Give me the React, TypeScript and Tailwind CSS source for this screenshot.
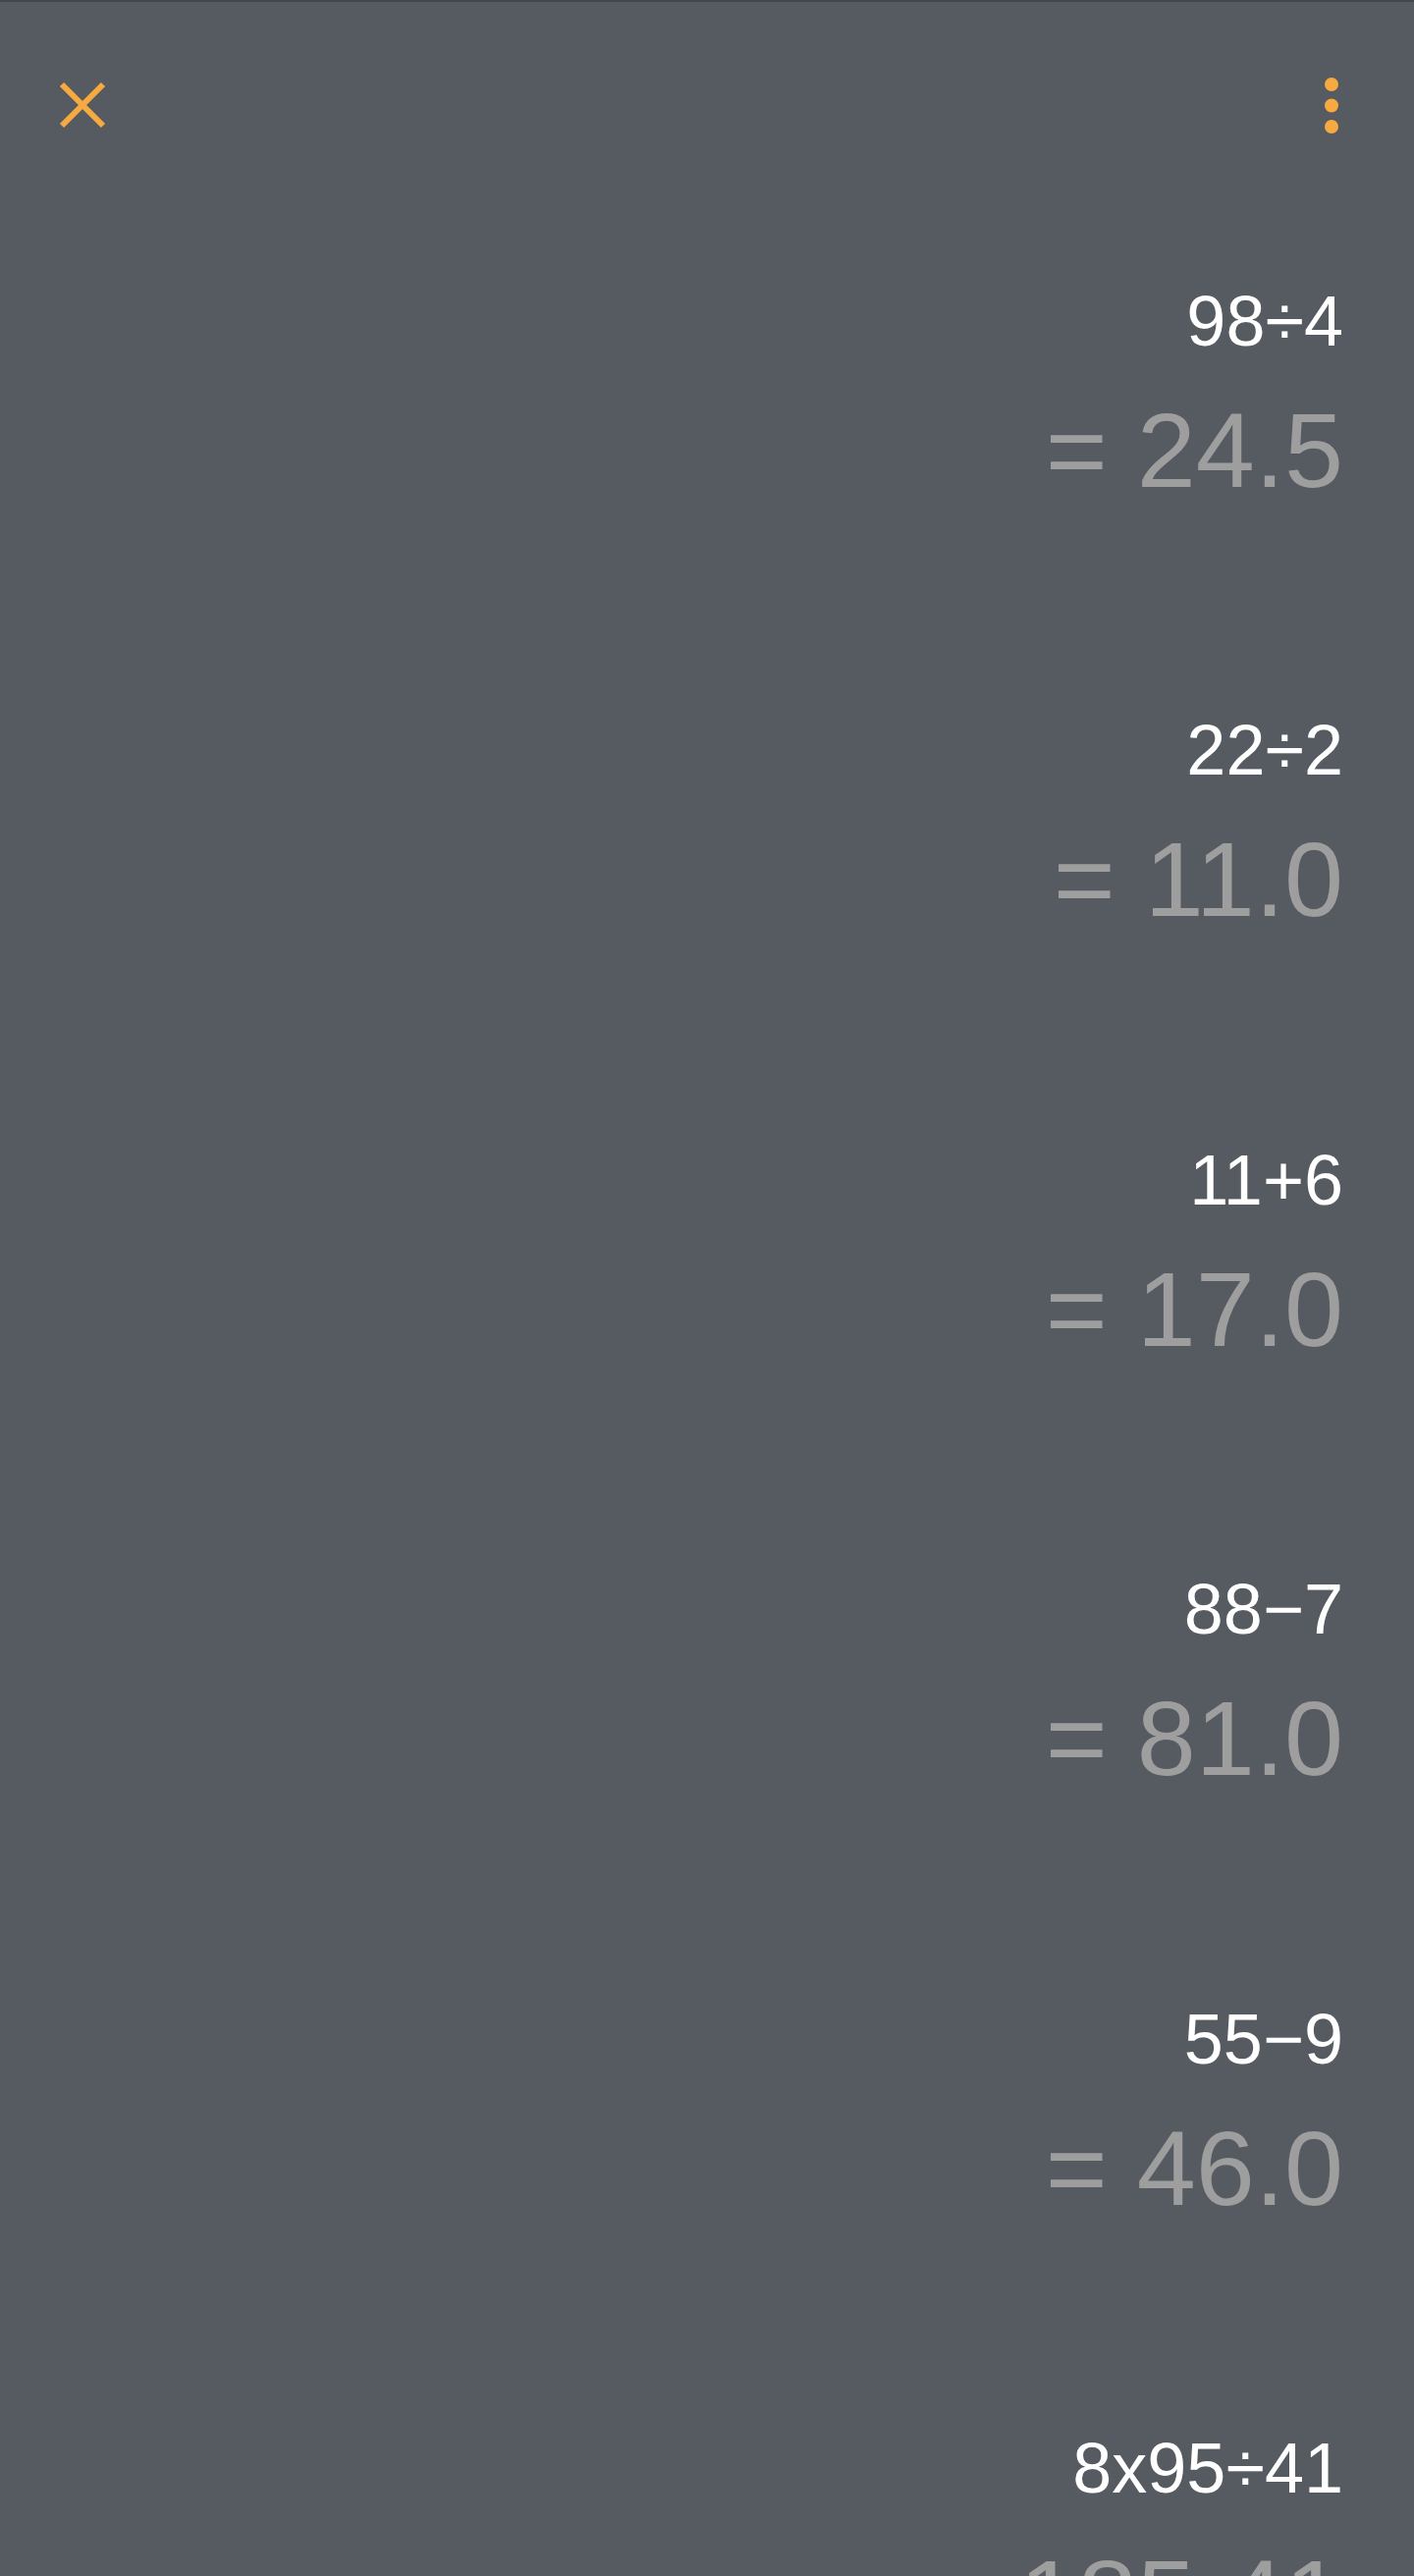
import React from 'react'

const history = [
  { expr: '98÷4', result: '= 24.5' },
  { expr: '22÷2', result: '= 11.0' },
  { expr: '11+6', result: '= 17.0' },
  { expr: '88−7', result: '= 81.0' },
  { expr: '55−9', result: '= 46.0' },
  { expr: '8x95÷41', result: '= 185.41' },
]

function CloseIcon() {
  return (
    <svg width="48" height="48" viewBox="0 0 48 48" fill="none">
      <path d="M3 3L45 45M45 3L3 45" stroke="#f6aa3f" strokeWidth="6" />
    </svg>
  )
}

function MoreIcon() {
  return (
    <svg width="14" height="57" viewBox="0 0 14 57" fill="#f6aa3f">
      <circle cx="7" cy="7" r="7" />
      <circle cx="7" cy="28.5" r="7" />
      <circle cx="7" cy="50" r="7" />
    </svg>
  )
}

export default function App() {
  return (
    <div
      className="h-[2624px] overflow-hidden border-t-2 border-[#43474d] bg-[#565a61]"
      style={{ fontFamily: '"Liberation Sans", Arial, sans-serif' }}
    >
      {/* Top bar */}
      <div className="flex h-[210px] items-center justify-between pl-[60px] pr-[77px]">
        <button className="flex">
          <CloseIcon />
        </button>
        <button className="flex">
          <MoreIcon />
        </button>
      </div>

      {/* History list */}
      <div className="flex flex-col gap-[215.5px] pt-[78.5px] pr-[72px]">
        {history.map((h, i) => (
          <div key={i} className="flex flex-col items-end gap-[42px]">
            <div className="text-[72px] leading-none text-white">{h.expr}</div>
            <div className="text-[108px] leading-none text-[#9e9e9e]">{h.result}</div>
          </div>
        ))}
      </div>
    </div>
  )
}
